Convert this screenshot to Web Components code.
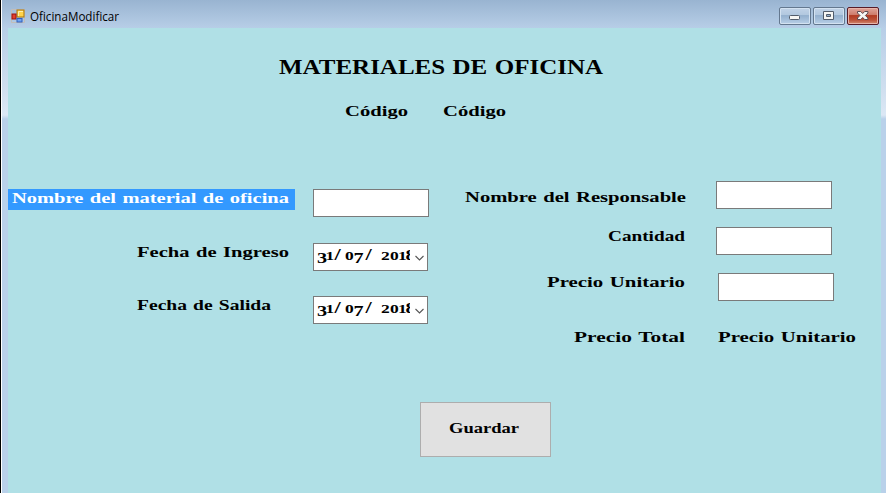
<!DOCTYPE html>
<html lang="es"><head><meta charset="utf-8"><title>OficinaModificar</title>
<style>html,body{margin:0;width:886px;height:493px;overflow:hidden}</style></head><body>
<app-window caption="OficinaModificar"><office-form></office-form></app-window>
<script>
const mount=(el,html)=>{el.attachShadow({mode:'open'}).innerHTML=html};

// Wide serif label: text is fitted to the "w" attribute, "base" is the baseline inside the box.
customElements.define('wide-label',class extends HTMLElement{
  connectedCallback(){
    const w=this.getAttribute('w'),b=this.getAttribute('base')||14,s=this.getAttribute('size')||15.5,h=this.getAttribute('h')||21;
    mount(this,`<style>:host{display:block;flex:none;height:${h}px;color:#000}svg{display:block;overflow:visible}
    text{font:bold ${s}px "Liberation Serif",serif;word-spacing:1px;fill:currentColor}</style>
    <svg width="${w}" height="${h}"><text x="0" y="${b}" textLength="${w}" lengthAdjust="spacingAndGlyphs">${this.getAttribute('text')}</text></svg>`);
  }});

customElements.define('text-field',class extends HTMLElement{
  connectedCallback(){mount(this,`<style>:host{display:block;flex:none;box-sizing:border-box;width:116px;height:28px;background:#fff;border:1px solid #7a7a7a}</style>`)}});

// Date with old-style numerals: 0, 1, 2 at x-height, 3 and 7 descending, 8 ascending.
customElements.define('date-field',class extends HTMLElement{
  connectedCallback(){
    const K=1.4;
    const g=(c,x)=>{
      const size='012'.includes(c)?12.5:c==='/'?16:14.5, y='37'.includes(c)?19:16;
      return `<tspan x="${x/K}" y="${y}" font-size="${size}">${c}</tspan>`};
    const seg=a=>`<text transform="scale(${K},1)">${a.map(p=>g(...p)).join('')}</text>`;
    mount(this,`<style>:host{display:flex;flex:none;box-sizing:border-box;width:115px;height:28px;background:#fff;border:1px solid #7a7a7a}
    svg{display:block;flex:none}text{font-family:"Liberation Serif",serif;font-weight:bold;fill:#000}</style>
    <svg width="96" height="26">${seg([['3',3],['1',11.5],['/',20.5]])}${seg([['0',31],['7',39.5],['/',51.5]])}${seg([['2',67],['0',76],['1',84],['8',91.5]])}</svg>
    <svg width="17" height="26"><path d="M5.500 12l4 4 4-4" fill="none" stroke="#555" stroke-width="1.1"/></svg>`)}});

customElements.define('push-button',class extends HTMLElement{
  connectedCallback(){mount(this,`<style>:host{display:flex;box-sizing:border-box;width:131px;height:55px;padding:16px 0 0 28px;background:#e1e1e1;border:1px solid #adadad}</style><slot></slot>`)}});

customElements.define('caption-button',class extends HTMLElement{
  connectedCallback(){
    const k=this.getAttribute('kind');
    const art={
      min:'<rect x="10.5" y="8.5" width="10" height="4" rx="1" fill="#f6f6f4" stroke="#525c6b"/>',
      max:'<path d="M10.500 4.500h10v8h-10zM13.500 7.500v2h4v-2z" fill="#f6f6f4" fill-rule="evenodd" stroke="#525c6b"/>',
      close:'<path d="M10.500 4.500h3.200l2 2 2-2h3.200v1.500l-2.500 2.500 2.500 2.500v1.500h-3.200l-2-2-2 2h-3.200v-1.500l2.500-2.500-2.500-2.500z" fill="#f6f6f4" stroke="#5b4a50"/>'}[k];
    const red=k==='close';
    mount(this,`<style>:host{display:block;box-sizing:border-box;width:32px;height:18px;border:1px solid ${red?'#571b27':'#64788f'};border-radius:2px;
    background:${red?'linear-gradient(#dea49a 0,#cd7968 45%,#b13a22 47%,#bc5138 75%,#d18b72)':'linear-gradient(#c1d3e7 0,#b1c7df 45%,#94b0ce 47%,#a6c0db 75%,#bad0e7)'};
    box-shadow:inset 0 0 0 1px ${red?'#e8b4a9':'#d3e2f1'}}svg{display:block;margin:-1px}</style><svg width="32" height="18">${art}</svg>`)}});

customElements.define('app-window',class extends HTMLElement{
  connectedCallback(){mount(this,`<style>
  :host{display:flex;flex-direction:column;box-sizing:border-box;width:886px;height:493px;padding:0 5px 0 6px;border-left:1px solid #000;box-shadow:inset 1px 0 #fff;
  background:linear-gradient(#99b4d1 0,#b7cee7 28px,#d0dfef 90px,#dce8f5 115px,#b9d1ea 119px)}
  header{display:flex;height:28px;flex:none;align-items:flex-start;gap:3px;padding:0 2px 0 4px;box-sizing:border-box}
  .ico{margin:9px 2px 0 0}
  .t{margin-top:8px;width:90px;overflow:visible}
  .btns{display:flex;gap:2px;margin:7px 0 0 auto}
  main{flex:1;background:#b0e0e6;margin-left:1px}
  text{font:12px "Open Sans","Noto Sans",sans-serif;fill:#000}
  </style><header><svg class="ico" width="14" height="14"><path d="M.5.5h13v13H.5z" fill="none" stroke="#c2bdb8"/><rect x="6" y="1" width="7" height="7" fill="#ffd34a" stroke="#a9760d"/><path d="M7.500 7V2.500H12" fill="none" stroke="#fff0ae"/><rect x="1" y="5" width="4" height="5" fill="#e0402d" stroke="#9c1111"/><rect x="6" y="9.500" width="5" height="3.500" fill="#6ea4f0" stroke="#315fbd"/></svg>
  <svg class="t" height="18"><text x="0" y="13" textLength="89" lengthAdjust="spacingAndGlyphs">${this.getAttribute('caption')}</text></svg>
  <div class="btns"><caption-button kind="min"></caption-button><caption-button kind="max"></caption-button><caption-button kind="close"></caption-button></div></header>
  <main><slot></slot></main>`)}});

customElements.define('office-form',class extends HTMLElement{
  connectedCallback(){mount(this,`<style>
  :host{display:block;padding-top:26px}
  .title{margin-left:271px}
  .code{display:flex;gap:35px;margin:21px 0 0 337px;height:20px}
  .cols{display:flex;margin-top:60px;height:167px}
  .left{width:421px;padding-top:8px;box-sizing:border-box}
  .row{display:flex;height:28px}
  .left .row>:first-child{box-sizing:border-box}
  .sel{background:#3399ff;width:287px;height:21px;padding-left:4px;margin-right:18px}
  .sel wide-label{color:#fff}
  .lab{width:305px;padding-left:129px}
  .right .row{margin-bottom:18px}
  .right .row>:first-child{width:257px;display:flex;justify-content:flex-end;box-sizing:border-box;padding-right:1px;margin-right:30px}
  .right .row.wide>:first-child{margin-right:32px}
  .right .row:first-child>:first-child{padding-right:0}
  push-button{margin:54px 0 0 412px}
  </style>
  <wide-label class="title" w="324" size="21" base="20" h="26" text="MATERIALES DE OFICINA"></wide-label>
  <div class="code"><wide-label w="63" base="15" text="Código"></wide-label><wide-label w="63" base="15" text="Código"></wide-label></div>
  <div class="cols">
   <div class="left">
    <div class="row"><div class="sel"><wide-label w="277" text="Nombre del material de oficina"></wide-label></div><text-field></text-field></div>
    <div class="row" style="margin-top:26px"><div class="lab"><wide-label w="152" text="Fecha de Ingreso"></wide-label></div><date-field></date-field></div>
    <div class="row" style="margin-top:25px"><div class="lab"><wide-label w="134" text="Fecha de Salida"></wide-label></div><date-field></date-field></div>
   </div>
   <div class="right">
    <div class="row"><div><wide-label w="221" base="21" text="Nombre del Responsable"></wide-label></div><text-field></text-field></div>
    <div class="row"><div><wide-label w="77" text="Cantidad"></wide-label></div><text-field></text-field></div>
    <div class="row wide"><div><wide-label w="138" text="Precio Unitario"></wide-label></div><text-field></text-field></div>
    <div class="row wide" style="margin-top:27px"><div><wide-label w="111" text="Precio Total"></wide-label></div><wide-label w="138" text="Precio Unitario"></wide-label></div>
   </div>
  </div>
  <push-button><wide-label w="70" text="Guardar"></wide-label></push-button>`)}});
</script></body></html>
